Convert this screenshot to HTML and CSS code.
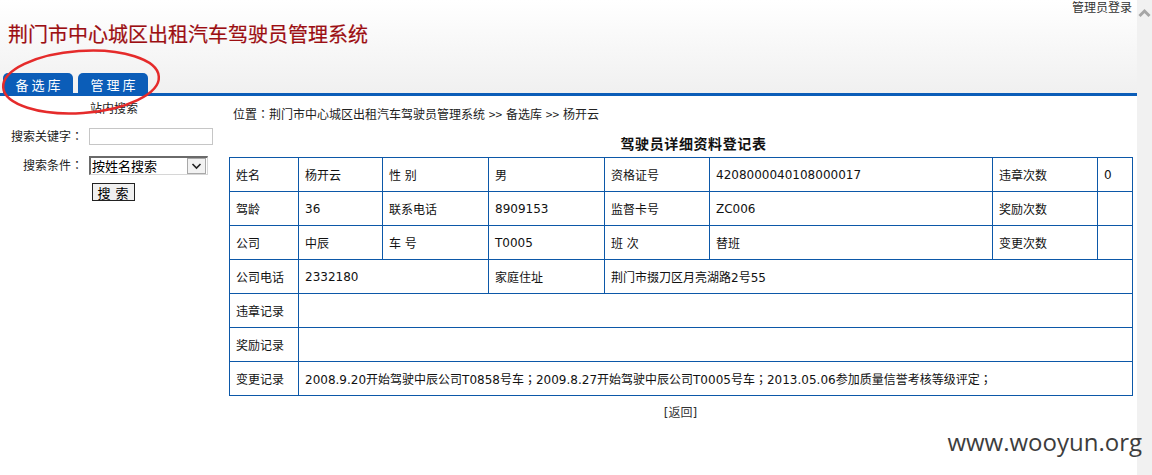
FILE: index.html
```html
<!DOCTYPE html>
<html lang="zh-CN">
  <head>
    <meta charset="UTF-8" />
    <meta name="viewport" content="width=device-width, initial-scale=1.0" />
    <title>荆门市中心城区出租汽车驾驶员管理系统</title>
    <link rel="stylesheet" href="styles.css">
  </head>
  <body>
    <div class="page">
      <div class="header">
        <div class="login"><a href="#">管理员登录</a></div>
        <h1 class="title">荆门市中心城区出租汽车驾驶员管理系统</h1>
        <ul class="tabs">
          <li><a href="#">备选库</a></li>
          <li><a href="#">管理库</a></li>
        </ul>
      </div>

      <div class="content">
        <div class="sidebar">
          <div class="search-title">站内搜索</div>
          <form class="search">
            <label>搜索关键字<span class="fw">：</span></label>
            <input type="text" class="keyword" />
            <label class="cond">搜索条件<span class="fw">：</span></label>
            <span class="select">
              <select>
                <option>按姓名搜索</option>
                <option>按资格证号搜索</option>
                <option>按车号搜索</option>
              </select>
              <span class="select-btn">
                <svg width="15" height="12" viewBox="0 0 15 12"><path d="M3.5 4 L7.5 8 L11.5 4" fill="none" stroke="#222" stroke-width="1.6"/></svg>
              </span>
            </span>
            <span></span>
            <button type="button" class="search-btn">搜 索</button>
          </form>
        </div>

        <div class="main">
          <div class="crumb">位置<span class="fw">：</span>荆门市中心城区出租汽车驾驶员管理系统 <span class="sep">&gt;&gt;</span> 备选库 <span class="sep">&gt;&gt;</span> 杨开云</div>
          <div class="caption">驾驶员详细资料登记表</div>
          <table class="detail">
            <colgroup>
              <col style="width:69px" />
              <col style="width:84px" />
              <col style="width:106px" />
              <col style="width:116px" />
              <col style="width:105px" />
              <col style="width:283px" />
              <col style="width:105px" />
              <col style="width:35px" />
            </colgroup>
            <tr>
              <td>姓名</td>
              <td>杨开云</td>
              <td>性 别</td>
              <td>男</td>
              <td>资格证号</td>
              <td>4208000040108000017</td>
              <td>违章次数</td>
              <td>0</td>
            </tr>
            <tr>
              <td>驾龄</td>
              <td>36</td>
              <td>联系电话</td>
              <td>8909153</td>
              <td>监督卡号</td>
              <td>ZC006</td>
              <td>奖励次数</td>
              <td></td>
            </tr>
            <tr>
              <td>公司</td>
              <td>中辰</td>
              <td>车 号</td>
              <td>T0005</td>
              <td>班 次</td>
              <td>替班</td>
              <td>变更次数</td>
              <td></td>
            </tr>
            <tr>
              <td>公司电话</td>
              <td colspan="2">2332180</td>
              <td>家庭住址</td>
              <td colspan="4">荆门市掇刀区月亮湖路2号55</td>
            </tr>
            <tr>
              <td>违章记录</td>
              <td colspan="7"></td>
            </tr>
            <tr>
              <td>奖励记录</td>
              <td colspan="7"></td>
            </tr>
            <tr>
              <td>变更记录</td>
              <td colspan="7">2008.9.20开始驾驶中辰公司T0858号车<span class="fw">；</span>2009.8.27开始驾驶中辰公司T0005号车<span class="fw">；</span>2013.05.06参加质量信誉考核等级评定<span class="fw">；</span></td>
            </tr>
          </table>
          <div class="back"><a href="#">[返回]</a></div>
        </div>
      </div>

      <!-- 标注圈 -->
      <svg class="mark" width="170" height="125" viewBox="0 0 170 125">
        <ellipse cx="81" cy="82" rx="78" ry="31" transform="rotate(-4 81 82)" fill="none" stroke="#e52b2b" stroke-width="2.5"/>
      </svg>
    </div>

    <div class="scrollbar">
      <svg width="15" height="20" viewBox="0 0 15 20"><path d="M2.5 16 L7.5 11 L12.5 16" fill="none" stroke="#a6a6a6" stroke-width="3"/></svg>
    </div>

    <div class="watermark">www.wooyun.org</div>
  </body>
</html>
```

FILE: styles.css
```css
html,
body {
  margin: 0;
  padding: 0;
}

body {
  display: flex;
  height: 475px;
  overflow: hidden;
  position: relative;
  font-family: "DejaVu Sans", "Noto Sans CJK SC", sans-serif;
  font-size: 12px;
  color: #111;
  background: #fff;
}

a {
  color: inherit;
  text-decoration: none;
}

/* 全角标点居中显示 */
.fw {
  font-family: "Noto Sans CJK JP", sans-serif;
  font-feature-settings: "locl" 0;
}

.page {
  flex: 1;
  position: relative;
}

/* Header */
.header {
  height: 93px;
  border-bottom: 3px solid #0b5db8;
  background: linear-gradient(#ffffff, #f0f0f0);
  display: flex;
  flex-direction: column;
}

.login {
  text-align: right;
  padding-right: 5px;
  line-height: 14px;
  color: #333;
  font-family: "Noto Sans CJK SC", sans-serif;
}

.title {
  margin: 8px 0 0 8px;
  font-size: 20px;
  font-weight: normal;
  line-height: 24px;
  color: #9c0e12;
  font-family: "Noto Sans CJK SC", sans-serif;
  -webkit-text-stroke: 0.2px #9c0e12;
}

.tabs {
  list-style: none;
  margin: auto 0 0;
  padding: 0 0 0 3px;
  display: flex;
  gap: 5px;
}

.tabs li a {
  display: block;
  width: 70px;
  height: 16px;
  padding-top: 4px;
  line-height: 16px;
  background: #0b5db8;
  border-radius: 5px 5px 0 0;
  color: #fff;
  text-align: center;
  font-size: 13px;
  letter-spacing: 3px;
  text-indent: 3px;
  font-family: "Noto Sans CJK SC", sans-serif;
}

/* Content */
.content {
  display: flex;
}

.sidebar {
  width: 229px;
  flex: none;
}

.search-title {
  margin: 6px 0 0 90px;
  line-height: 14px;
  color: #222;
}

.search {
  display: grid;
  grid-template-columns: 89px auto;
  align-items: center;
  justify-items: start;
  margin: 12px 0 0;
}

.search label {
  justify-self: end;
  padding-right: 6px;
  line-height: 14px;
  color: #222;
}

.search label.cond {
  margin-top: 11px;
}

.keyword {
  width: 124px;
  height: 17px;
  box-sizing: border-box;
  margin: 0;
  padding: 0 2px;
  border: 1px solid #c6c6c6;
}

.select {
  position: relative;
  display: block;
  width: 119px;
  height: 19px;
  box-sizing: border-box;
  margin-top: 11px;
  border-top: 2px solid #6a6a6a;
  border-left: 2px solid #6a6a6a;
  border-right: 1px solid #d6d6d6;
  border-bottom: 1px solid #d6d6d6;
  background: #fff;
}

.select select {
  appearance: none;
  -webkit-appearance: none;
  display: block;
  width: 100%;
  height: 100%;
  margin: 0;
  padding: 0 0 1px 1px;
  border: 0;
  background: transparent;
  font-family: "Noto Sans CJK SC", sans-serif;
  font-size: 13px;
  line-height: 15px;
  color: #000;
}

.select-btn {
  position: absolute;
  right: 1px;
  top: 0;
  width: 17px;
  height: 14px;
  border: 1px solid #a8a8a8;
  background: #f2f2f2;
  display: flex;
  align-items: center;
  justify-content: center;
}

.search-btn {
  margin: 8px 0 0 3px;
  width: 43px;
  height: 18px;
  padding: 0;
  border: 1px solid #222;
  background: #f0f0f0;
  font-family: "Noto Sans CJK SC", sans-serif;
  font-size: 13px;
  line-height: 15px;
  letter-spacing: 1px;
  color: #000;
}

.main {
  flex: none;
  width: 908px;
}

.crumb {
  margin: 11px 0 0 4px;
  line-height: 14px;
  color: #222;
}

.crumb .sep {
  font-family: "Noto Sans CJK SC", sans-serif;
  font-size: 12px;
}

.caption {
  width: 877px;
  margin-top: 15px;
  padding-left: 26px;
  text-align: center;
  font-weight: bold;
  font-size: 14px;
  line-height: 14px;
  letter-spacing: 0.6px;
  color: #111;
}

.detail {
  margin-top: 6px;
  width: 903px;
  table-layout: fixed;
  border-collapse: collapse;
}

.detail td {
  height: 33px;
  padding: 0 0 0 6px;
  border: 1px solid #0c58a8;
  vertical-align: middle;
  white-space: nowrap;
}

.back {
  width: 903px;
  margin-top: 10px;
  text-align: center;
  line-height: 14px;
  color: #333;
}

/* 标注 */
.mark {
  position: absolute;
  left: 0;
  top: 0;
  pointer-events: none;
}

.scrollbar {
  width: 15px;
  flex: none;
  background: #f1f1f1;
}

.scrollbar svg {
  display: block;
}

.watermark {
  position: absolute;
  right: 10px;
  top: 427px;
  font-family: "Open Sans", sans-serif;
  font-size: 24px;
  line-height: 30px;
  color: #3d3d3d;
}
```
